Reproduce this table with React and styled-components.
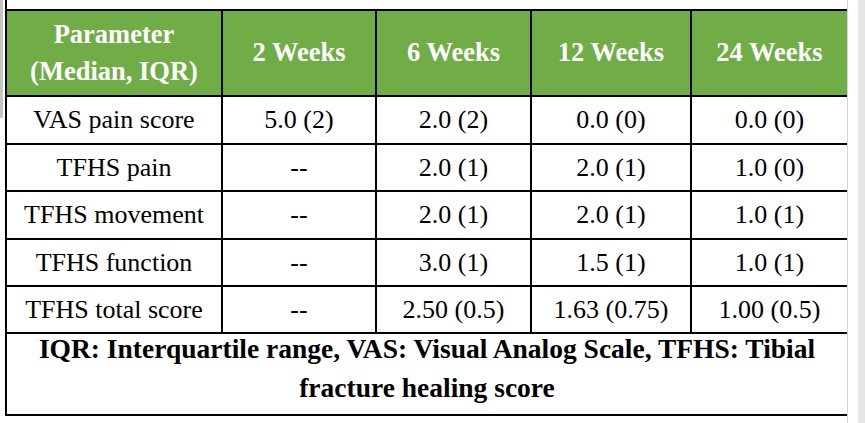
import React from "react";
import styled, { createGlobalStyle } from "styled-components";

const GlobalStyle = createGlobalStyle`
  html, body {
    margin: 0;
    padding: 0;
    background: #ffffff;
  }
`;

const serif = `"Liberation Serif", Tinos, "Times New Roman", "DejaVu Serif", serif`;

const Page = styled.div`
  display: flex;
  width: 865px;
  height: 423px;
  overflow: hidden;
  background: #ffffff;
  font-family: ${serif};
  color: #000;
`;

const LeftEdge = styled.div`
  width: 3px;
  height: 118px;
  background: #c4c4c4;
  flex-shrink: 0;
`;

const Sheet = styled.div`
  margin-left: 2px;
  width: 842px;
  height: 416px;
  box-sizing: border-box;
  border-left: 2px solid #000;
  padding-top: 9px;
  flex-shrink: 0;
`;

const EdgeLine = styled.div`
  width: 1px;
  background: #d4d4d4;
  flex-shrink: 0;
`;

const RightPanel = styled.div`
  margin-left: 10px;
  width: 7px;
  background: #e6e6e6;
  flex-shrink: 0;
`;

const Table = styled.div`
  display: grid;
  grid-template-columns: 214px 154px 155px 160px 157px;
  grid-template-rows: 86px 48px 47px 48px 47px 47px 84px;
`;

const Cell = styled.div`
  box-sizing: border-box;
  display: flex;
  align-items: center;
  justify-content: center;
  text-align: center;
  font-family: ${serif};
  border-top: 2px solid #000;
  border-left: ${(p) => (p.$first ? "none" : "2px solid #000")};
  background: ${(p) => (p.$head ? "#70ad47" : "#ffffff")};
  color: ${(p) => (p.$head ? "#ffffff" : "#000000")};
  font-weight: ${(p) => (p.$head ? 700 : 400)};
  font-size: ${(p) => (p.$head ? "26.5px" : "26px")};
  line-height: ${(p) => (p.$head ? "37.5px" : "30px")};
  white-space: nowrap;
`;

const Footer = styled.div`
  grid-column: 1 / -1;
  box-sizing: border-box;
  border-top: 2px solid #000;
  border-bottom: 2px solid #000;
  display: flex;
  justify-content: center;
`;

const Note = styled.p`
  margin: -5px 0 0;
  width: 800px;
  text-align: center;
  font-family: ${serif};
  font-weight: 700;
  font-size: 27.5px;
  line-height: 39px;
`;

const headers = [
  ["Parameter", "(Median, IQR)"],
  ["2 Weeks"],
  ["6 Weeks"],
  ["12 Weeks"],
  ["24 Weeks"],
];

const rows = [
  ["VAS pain score", "5.0 (2)", "2.0 (2)", "0.0 (0)", "0.0 (0)"],
  ["TFHS pain", "--", "2.0 (1)", "2.0 (1)", "1.0 (0)"],
  ["TFHS movement", "--", "2.0 (1)", "2.0 (1)", "1.0 (1)"],
  ["TFHS function", "--", "3.0 (1)", "1.5 (1)", "1.0 (1)"],
  ["TFHS total score", "--", "2.50 (0.5)", "1.63 (0.75)", "1.00 (0.5)"],
];

const App = () => {
  return (
    <Page>
      <GlobalStyle />
      <LeftEdge />
      <Sheet>
        <Table>
          {headers.map((lines, i) => (
            <Cell key={"h" + i} $head $first={i === 0}>
              <div>
                {lines.map((l) => (
                  <div key={l}>{l}</div>
                ))}
              </div>
            </Cell>
          ))}
          {rows.map((row, r) =>
            row.map((val, c) => (
              <Cell key={r + "-" + c} $first={c === 0}>
                {val}
              </Cell>
            ))
          )}
          <Footer>
            <Note>
              IQR: Interquartile range, VAS: Visual Analog Scale, TFHS: Tibial
              fracture healing score
            </Note>
          </Footer>
        </Table>
      </Sheet>
      <EdgeLine />
      <RightPanel />
    </Page>
  );
};

export default App;
